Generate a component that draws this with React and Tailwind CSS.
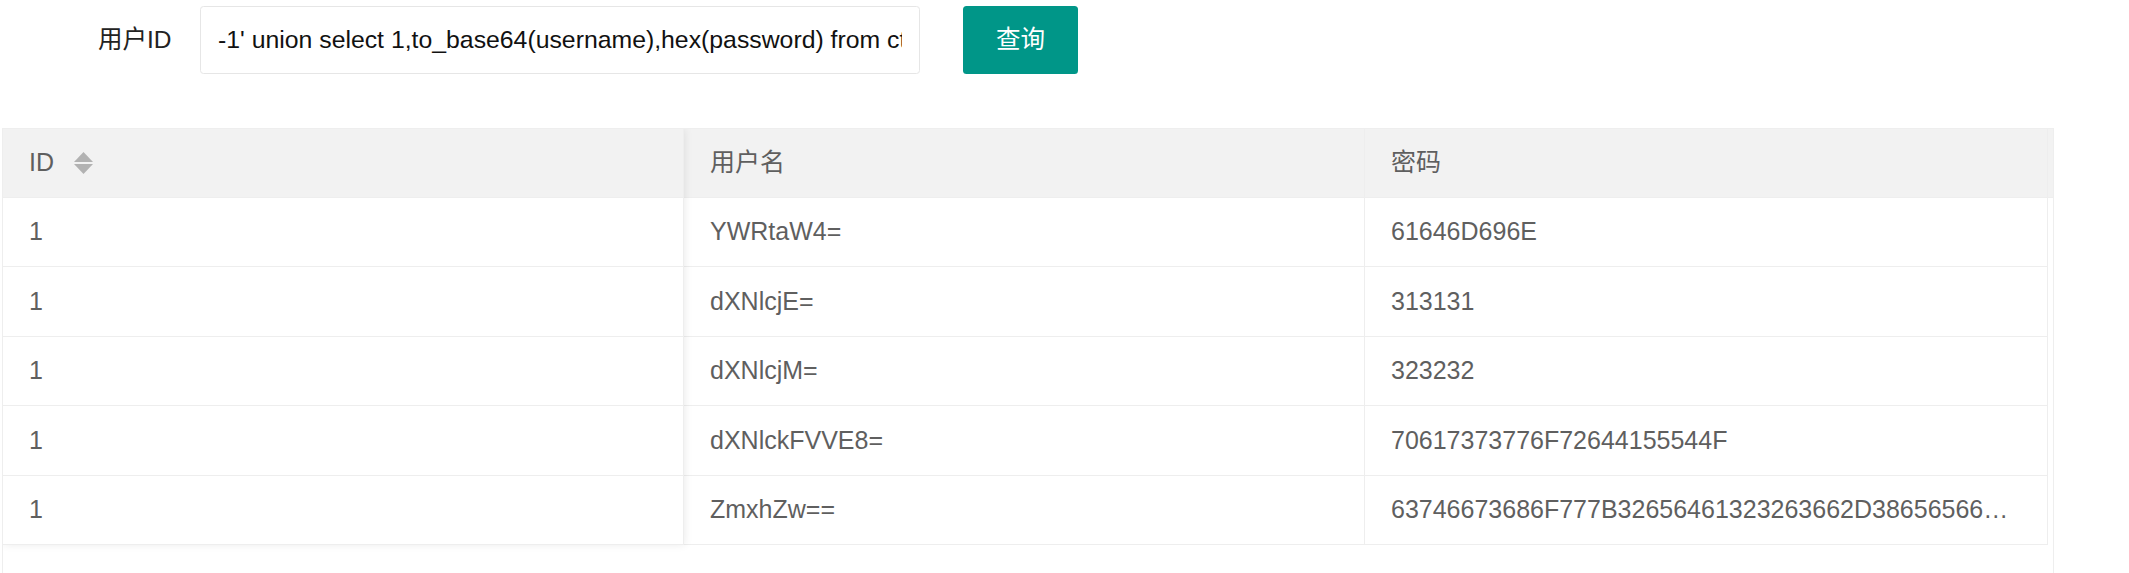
const rows = [
  { id: '1', name: 'YWRtaW4=', pass: '61646D696E' },
  { id: '1', name: 'dXNlcjE=', pass: '313131' },
  { id: '1', name: 'dXNlcjM=', pass: '323232' },
  { id: '1', name: 'dXNlckFVVE8=', pass: '70617373776F72644155544F' },
  {
    id: '1',
    name: 'ZmxhZw==',
    pass: '63746673686F777B32656461323263662D38656566643132332D346461652D616231322D3736626566643163383132647D',
  },
]

function SortIcon() {
  return (
    <svg width="19" height="22" viewBox="0 0 19 22" className="ml-[20px]">
      <path d="M9.5 0 L19 10 L0 10 Z" fill="#b2b2b2" />
      <path d="M0 12 L19 12 L9.5 22 Z" fill="#b2b2b2" />
    </svg>
  )
}

export default function App() {
  return (
    <div className="h-[573px] w-full overflow-hidden bg-white font-['Liberation_Sans','Noto_Sans_CJK_SC',sans-serif]">
      {/* Query form */}
      <div className="flex items-center pt-[6px] pl-[98px]">
        <label className="w-[102px] text-[24.5px] text-[#222]">用户ID</label>
        <input
          readOnly
          value="-1' union select 1,to_base64(username),hex(password) from ctfshow_user4 --+"
          className="h-[68px] w-[720px] rounded-[3.5px] border border-[#e6e6e6] bg-white px-[17px] text-[24.8px] text-[#111] outline-none"
        />
        <button className="ml-[43px] h-[68px] w-[115px] rounded-[3.5px] bg-[#009688] text-[24.5px] text-white">
          查询
        </button>
      </div>

      {/* Result table */}
      <div className="ml-[2px] mt-[54px] flex h-[470px] w-[2052px] overflow-hidden border border-[#eee] text-[25px] text-[#5f5f5f]">
        {/* fixed first column */}
        <div className="relative z-10 w-[681px] shrink-0 self-start bg-white shadow-[1px_0_8px_rgba(0,0,0,0.08)]">
          <div className="flex h-[69px] items-center border-b border-r border-[#eee] bg-[#f2f2f2] pl-[26px]">
            ID
            <SortIcon />
          </div>
          {rows.map((r, i) => (
            <div key={i} className="flex h-[69.4px] items-center border-b border-r border-[#eee] pl-[26px]">
              {r.id}
            </div>
          ))}
        </div>

        {/* main columns */}
        <div className="flex min-w-0 flex-1 flex-col">
          <div className="flex h-[69px] border-b border-[#eee] bg-[#f2f2f2]">
            <div className="flex w-[681px] shrink-0 items-center border-r border-[#eee] pl-[26px]">用户名</div>
            <div className="flex w-[683px] shrink-0 items-center border-r border-[#eee] pl-[26px]">密码</div>
            <div className="flex-1" />
          </div>
          {rows.map((r, i) => (
            <div key={i} className="flex h-[69.4px]">
              <div className="flex w-[681px] shrink-0 items-center border-b border-r border-[#eee] pl-[26px]">
                {r.name}
              </div>
              <div className="flex w-[683px] shrink-0 items-center border-b border-r border-[#eee] px-[26px]">
                <span className="overflow-hidden text-ellipsis whitespace-nowrap">{r.pass}</span>
              </div>
            </div>
          ))}
        </div>
      </div>
    </div>
  )
}
